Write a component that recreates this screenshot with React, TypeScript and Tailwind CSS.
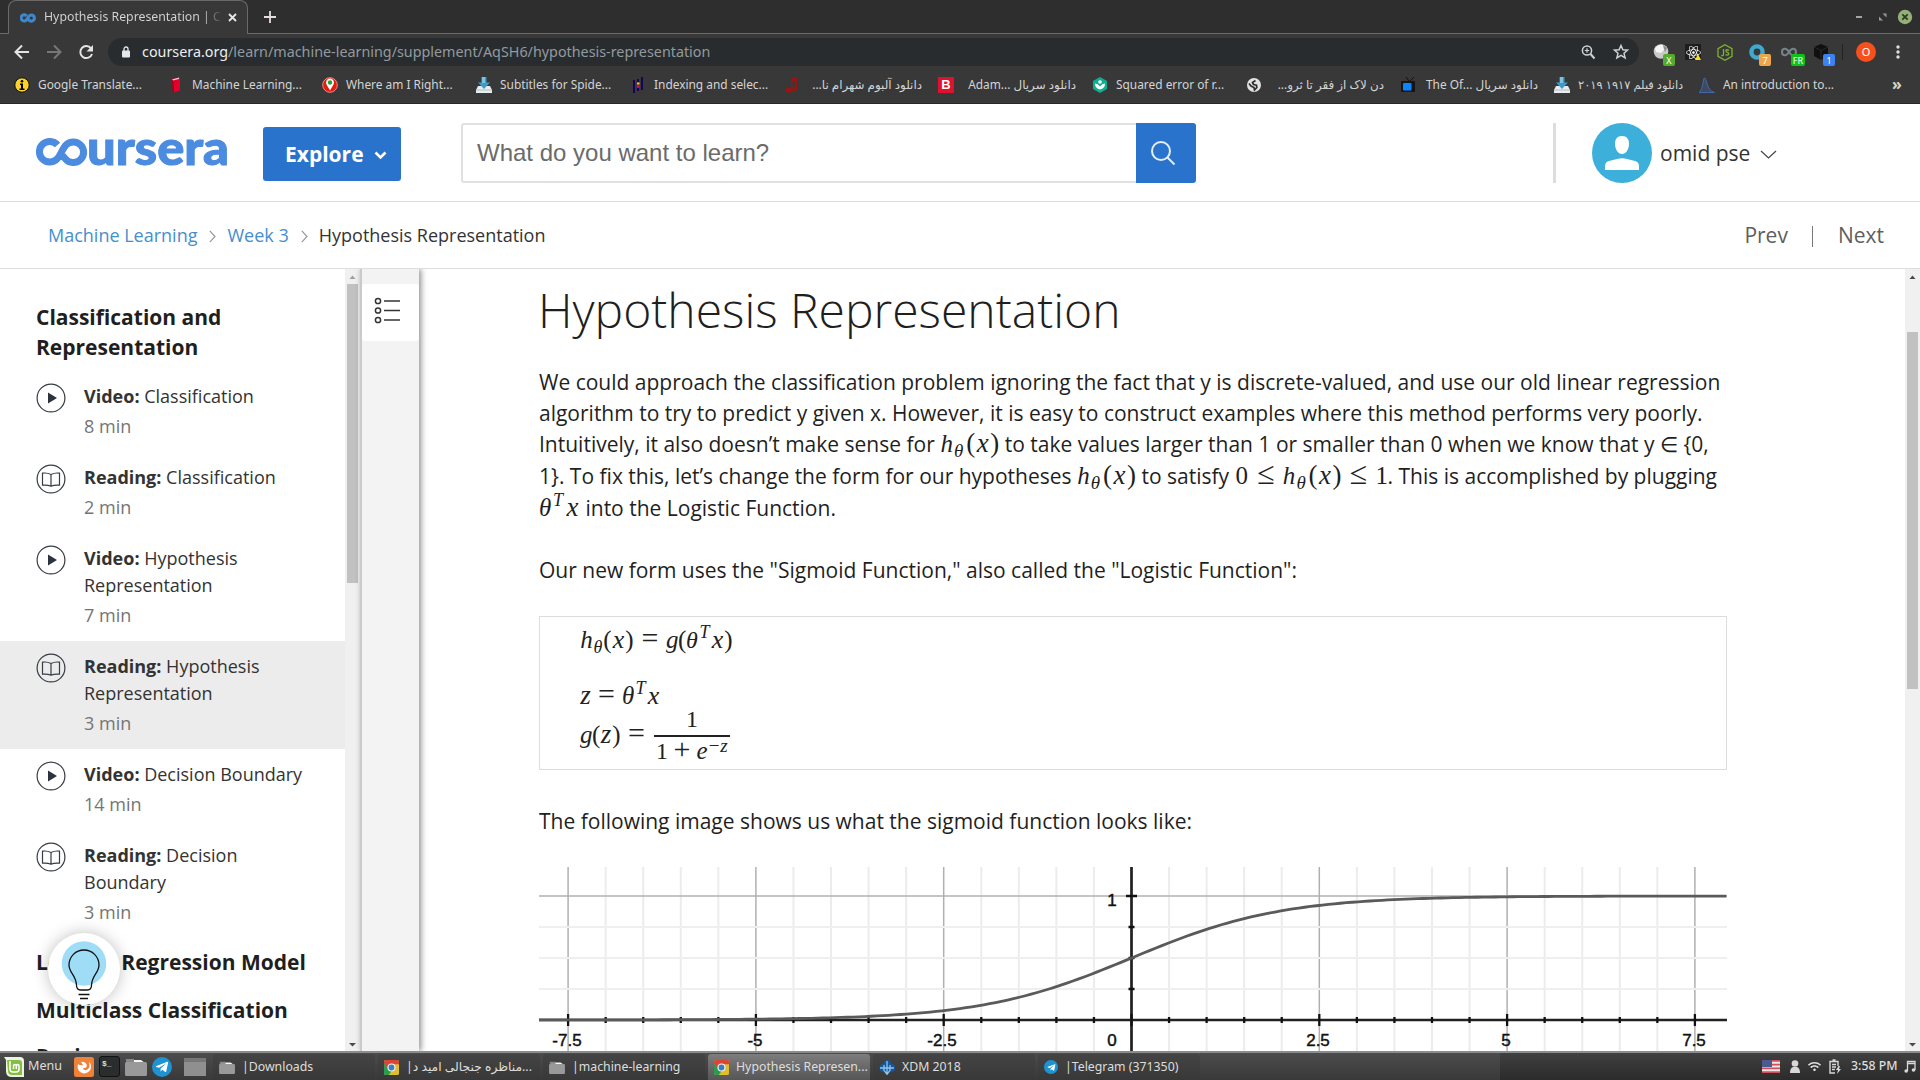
import React from "react";
import { FaWifi, FaReact, FaTelegramPlane } from "react-icons/fa";

const BrandMark = ({ className, color, width = 7 }: { className: string; color: string; width?: number }) => (
  <svg className={className} viewBox="0 0 52 28" fill="none" stroke={color} strokeWidth={width}>
    <path d="M21.5 7.5 A10 10 0 1 0 20.5 21 C24 17.5 26 11 29.5 7.5 A10 10 0 1 1 29 20.5 L25.8 16.5" />
  </svg>
);

/* ---------- browser chrome ---------- */

const TabStrip = () => (
  <div className="flex h-[34px] bg-[#2e2e2e]">
    <div className="w-[8px] border-b border-[#6a6a6a]" />
    <div className="flex h-[34px] w-[240px] items-center rounded-t-[8px] border border-b-0 border-[#6a6a6a] bg-[#383838] pl-[11px] text-[12.3px] text-[#d6d6d6]">
      <BrandMark className="h-[10px] w-[16px] shrink-0" color="#3d87cf" width={10} />
      <span className="ml-[8px] w-[177px] overflow-hidden bg-gradient-to-r from-[#d6d6d6] from-90% to-[#444] bg-clip-text whitespace-nowrap text-transparent">
        Hypothesis Representation | Co
      </span>
      <svg className="ml-[7px] h-[9px] w-[9px]" viewBox="0 0 9 9" stroke="#e8e8e8" strokeWidth="1.8">
        <path d="M1 1l7 7M8 1l-7 7" />
      </svg>
    </div>
    <div className="flex flex-1 items-center border-b border-[#6a6a6a]">
      <svg className="ml-[16px] h-[12px] w-[12px]" viewBox="0 0 12 12" stroke="#e6dede" strokeWidth="1.8">
        <path d="M6 0v12M0 6h12" />
      </svg>
      <svg className="ml-auto h-[16px] w-[66px]" viewBox="0 0 66 16">
        <path d="M2 8h6" stroke="#a4a4a4" strokeWidth="2" />
        <path d="M28.500 4.500h4v4zM25 7.500v4h4z" fill="#999" />
        <circle cx="51" cy="8" r="7.200" fill="#94b078" />
        <path d="M48.300 5.300l5.400 5.400M53.700 5.300l-5.400 5.400" stroke="#2c3a20" strokeWidth="1.800" />
      </svg>
    </div>
  </div>
);

const Extension = ({ children, badge, badgeClass }: { children: React.ReactNode; badge?: string; badgeClass?: string }) => (
  <div className="relative flex h-[20px] w-[32px] items-center justify-center">
    {children}
    {badge && (
      <span className={`absolute top-[12px] left-[18px] flex h-[12px] items-center justify-center rounded-[2px] text-[9px] leading-none text-white ${badgeClass}`}>
        {badge}
      </span>
    )}
  </div>
);

const Toolbar = () => (
  <div className="flex h-[36px] items-center bg-[#383838]">
    <svg className="h-[20px] w-[108px] shrink-0" viewBox="0 0 108 20" fill="none" strokeWidth="2">
      <path d="M29 10H16M22 3.500L15.500 10l6.500 6.500" stroke="#e4e4e4" />
      <path d="M47 10h13M54 3.500l6.500 6.500-6.500 6.500" stroke="#777" />
      <path d="M91 6.300A6 6 0 1 0 92 12" stroke="#e4e4e4" />
      <path d="M93 3v6.500h-6.500z" fill="#e4e4e4" />
    </svg>
    <div className="flex h-[28px] w-[1531px] items-center rounded-full bg-[#282c2f] pr-[5px] pl-[14px]">
      <svg className="h-[12px] w-[8px]" viewBox="0 0 8 12">
        <path d="M2 5V3a2 2 0 0 1 4 0v2" fill="none" stroke="#e4e8ea" strokeWidth="1.300" />
        <rect y="4.500" width="8" height="7" rx="1" fill="#e4e8ea" />
      </svg>
      <span className="mb-[1px] ml-[12px] text-[14.33px] whitespace-nowrap text-[#939a9e]">
        <span className="text-[#eceeef]">coursera.org</span>/learn/machine-learning/supplement/AqSH6/hypothesis-representation
      </span>
      <svg className="ml-auto h-[16px] w-[54px]" viewBox="0 0 54 16" fill="none" stroke="#cfd2d4">
        <circle cx="7" cy="6.500" r="4.600" strokeWidth="1.500" />
        <path d="M10.500 10l4 4.500" strokeWidth="2" />
        <path d="M4.800 6.500h4.400M7 4.300v4.400" strokeWidth="1.200" />
        <path d="M41 1.500l1.900 4.300 4.600.4-3.500 3.100 1.100 4.600-4.100-2.500-4.100 2.500L38 9.300l-3.500-3.100 4.600-.4z" strokeWidth="1.500" />
      </svg>
    </div>
    <div className="ml-[6px] flex items-center">
      <Extension badge="X" badgeClass="w-[12px] bg-[#56ab2f]">
        <svg className="h-[16px] w-[16px]" viewBox="0 0 16 16">
          <circle cx="8" cy="7.500" r="7.300" fill="#c9c9c9" />
          <path d="M2 4q4-5 8-3l1 5-3 3-5-1z" fill="#f4f4f4" />
          <path d="M10 1l4 3-2 4z" fill="#8a8a8a" />
        </svg>
      </Extension>
      <Extension>
        <span className="flex h-[16px] w-[16px] items-center justify-center bg-[#1d1d1d]">
          <FaReact className="h-[15px] w-[15px] text-white" />
        </span>
        <svg className="absolute top-[12px] left-[18px] h-[6px] w-[6px]" viewBox="0 0 6 6">
          <path d="M3 0l3 6H0z" fill="#f7df1e" />
        </svg>
      </Extension>
      <Extension>
        <svg className="h-[17px] w-[16px]" viewBox="0 0 16 17" fill="none" stroke="#7db32e" strokeWidth="1.300">
          <path d="M8 .8l7 3.900v7.600L8 16.200l-7-3.900V4.700z" />
          <path d="M6.500 5v5.500q0 1.500-2.200 1M12 6.300Q9 5 8.900 6.700 9 8 10.500 8.300 12 8.800 11.800 10 11 11.800 8.500 10.700" />
        </svg>
      </Extension>
      <Extension badge="7" badgeClass="w-[12px] bg-[#efa64a]">
        <svg className="h-[16px] w-[16px]" viewBox="0 0 16 16">
          <circle cx="8" cy="8" r="5.600" fill="none" stroke="#3fa9d0" strokeWidth="4.400" />
        </svg>
      </Extension>
      <Extension badge="FR" badgeClass="w-[14px] bg-[#0fc01d]">
        <svg className="h-[10px] w-[16px]" viewBox="0 0 16 10" fill="none" stroke="#77838b" strokeWidth="2">
          <path d="M8 5C5 0 1 1.500 1 5s4 5 7 0 7-3.500 7 0-4 5-7 0" />
        </svg>
      </Extension>
      <Extension badge="1" badgeClass="w-[12px] bg-[#3c82f0]">
        <svg className="h-[16px] w-[16px]" viewBox="0 0 16 16">
          <path d="M8 0l7 3v9l-7 4-7-4V3z" fill="#101010" />
          <path d="M1 3l7 3.500L15 3M8 6.500V16" stroke="#2a2a2a" fill="none" />
        </svg>
      </Extension>
    </div>
    <div className="ml-[5px] h-[16px] w-px bg-[#222]" />
    <div className="ml-[13px] flex h-[20px] w-[20px] items-center justify-center rounded-full bg-[#f6511d] text-[11px] text-white">O</div>
    <svg className="ml-[20px] h-[14px] w-[4px]" viewBox="0 0 4 14" fill="#dedede">
      <circle cx="2" cy="2" r="1.700" />
      <circle cx="2" cy="7" r="1.700" />
      <circle cx="2" cy="12" r="1.700" />
    </svg>
  </div>
);

const InfoIcon = () => (
  <svg viewBox="0 0 16 16">
    <circle cx="8" cy="8" r="7.200" fill="#fcd22b" stroke="#111" />
    <circle cx="8" cy="4.200" r="1.300" />
    <path d="M6 6.500h3v5h1.500V13H5.500v-1.500H7V8H6z" />
  </svg>
);
const RedBook = () => (
  <svg viewBox="0 0 16 16">
    <path d="M4 2l8-1.500v13L6 15.500z" fill="#e4002b" />
    <path d="M4 2.500l7-2V2L5 3.500z" fill="#f3c5cc" />
    <path d="M4 3l1.500 1L6 15.500 4.500 14z" fill="#a3001e" />
  </svg>
);
const PinIcon = () => (
  <svg viewBox="0 0 16 16">
    <circle cx="8" cy="8" r="7.300" fill="#e51a10" stroke="#ef8a80" />
    <path d="M8 13.500L4.500 7.500a4 4 0 1 1 7 0z" fill="#fff" />
    <circle cx="8" cy="5.500" r="2.200" fill="#24a030" />
  </svg>
);
const TrayIcon = () => (
  <svg viewBox="0 0 16 16">
    <path d="M2 9h12l2 4v3H0v-3z" fill="#e9edf0" />
    <path d="M0 13h16" stroke="#b5bcc2" />
    <path d="M5.500 0h5v5.500H14L8 12 2 5.500h3.500z" fill="#3d9ac9" />
    <path d="M6 0h3v6H6z" fill="#79c3e4" />
  </svg>
);
const PandasIcon = () => (
  <svg viewBox="0 0 16 16">
    <path d="M4 3v13M12 0v13" stroke="#150458" strokeWidth="2" />
    <path d="M8 2v3M8 11v3" stroke="#150458" strokeWidth="2" />
    <path d="M7 5.500h2.500v2H7z" fill="#ffca00" />
    <path d="M7 8.500h2.500v2H7z" fill="#e70488" />
  </svg>
);
const NotesIcon = () => (
  <svg viewBox="0 0 16 16" fill="#951512">
    <path d="M7 1l6-1v11h-1.500V4L8.500 5v8H7z" />
    <ellipse cx="5" cy="13" rx="4" ry="2.600" />
    <ellipse cx="11" cy="12" rx="2.300" ry="2" />
  </svg>
);
const LetterB = () => (
  <span className="flex h-[16px] w-[16px] items-center justify-center bg-[#e0102f] font-['Liberation_Sans',sans-serif] text-[13px] font-bold text-white">B</span>
);
const GreenHex = () => (
  <svg viewBox="0 0 16 16">
    <path d="M8 0l7 4v8l-7 4-7-4V4z" fill="#0fae90" />
    <circle cx="8" cy="5" r="1.800" fill="#fff" />
    <path d="M3 6.500q3 0 5 3 2-3 5-3 0 5-5 6-5-1-5-6z" fill="#fff" />
  </svg>
);
const Globe = () => (
  <svg viewBox="0 0 16 16">
    <circle cx="8" cy="8" r="7" fill="#e2e2e2" />
    <path d="M9.500 3.500L6.500 5.500l1 2 3 .8.300 2.200-2.300 2.500-.5-2.500L5 9 3 6.500" fill="none" stroke="#2d2d2d" strokeWidth="1.700" />
  </svg>
);
const TvIcon = () => (
  <svg viewBox="0 0 16 16">
    <path d="M9 4L6 0M10 4l4-4" stroke="#111" />
    <rect x="1" y="4" width="14" height="11" rx="1" fill="#151515" />
    <rect x="3" y="6" width="8.500" height="7.500" rx="1" fill="#0a84ff" />
  </svg>
);
const DensityIcon = () => (
  <svg viewBox="0 0 16 16">
    <path d="M0 15.500Q3 14 4.500 3 5.500-2 7.500 5q2 9 8 10.500z" fill="#3c4a63" stroke="#4668a8" />
  </svg>
);

const bookmarks: { icon: React.FC; text: string; rtl?: boolean; end?: boolean; cell?: string }[] = [
  { icon: InfoIcon, text: "Google Translate..." },
  { icon: RedBook, text: "Machine Learning..." },
  { icon: PinIcon, text: "Where am I Right..." },
  { icon: TrayIcon, text: "Subtitles for Spide..." },
  { icon: PandasIcon, text: "Indexing and selec..." },
  { icon: NotesIcon, text: "دانلود آلبوم شهرام نا...", rtl: true, end: true },
  { icon: LetterB, text: "Adam... دانلود سریال", end: true },
  { icon: GreenHex, text: "Squared error of r..." },
  { icon: Globe, text: "دن لاک از فقر تا ثرو...", rtl: true, end: true },
  { icon: TvIcon, text: "The Of... دانلود سریال", end: true },
  { icon: TrayIcon, text: "دانلود فیلم ۱۹۱۷ ۲۰۱۹", rtl: true, cell: "flex w-[145px] shrink-0 items-center text-[11.5px]" },
  { icon: DensityIcon, text: "An introduction to..." },
];

const Bookmarks = () => (
  <div className="flex h-[34px] items-center border-b border-[#2b2628] bg-[#383838] pb-[3px] pl-[14px] text-[11.9px] text-[#d4d4d4]">
    {bookmarks.map(({ icon: Icon, text, rtl, end, cell }, i) => (
      <div key={i} className={cell ?? "flex w-[154px] shrink-0 items-center"}>
        <span className="h-[16px] w-[16px] shrink-0">
          <Icon />
        </span>
        <span className={end ? "ml-[8px] w-[114px] text-right whitespace-nowrap" : "ml-[8px] whitespace-nowrap"}>
          <bdi dir={rtl ? "rtl" : "ltr"}>{text}</bdi>
        </span>
      </div>
    ))}
    <span className="mb-[3px] ml-[39px] text-[16px] leading-none font-bold">»</span>
  </div>
);

/* ---------- site header ---------- */

const SiteHeader = () => (
  <header className="flex h-[98px] shrink-0 items-center border-b border-[#ddd] bg-white pt-[1px] pl-[36px]">
    <div className="mb-[3px] flex h-[28px] w-[192px]">
      <svg className="h-[28px] w-[192px] overflow-visible" viewBox="0 0 192 28">
        <path d="M21.500 7A10.300 10.300 0 1 0 21 21C24.500 17.500 26.500 10.500 30 7A10.300 10.300 0 1 1 29.500 21L26.500 17.500" fill="none" stroke="#4b8be0" strokeWidth="7" />
        <text x="51" y="27" textLength="142" lengthAdjust="spacingAndGlyphs" fontFamily="Lato, sans-serif" fontWeight="900" fontSize="47" fill="#4b8be0" stroke="#4b8be0" strokeWidth="1">
          ursera
        </text>
      </svg>
    </div>
    <button className="mt-[2px] ml-[35px] flex h-[54px] w-[138px] items-center rounded-[3px] bg-[#2a73cc] pt-[2px] pl-[22px] text-[21px] font-bold text-white">
      Explore
      <svg className="ml-[10px] h-[9px] w-[13px]" viewBox="0 0 13 9" fill="none" stroke="#fff" strokeWidth="2.600">
        <path d="M1.500 1.500l5 5 5-5" />
      </svg>
    </button>
    <div className="ml-[60px] flex h-[60px] w-[675px] items-center rounded-l-[3px] border-2 border-r-0 border-[#e1e1e1] pl-[14px] font-['Liberation_Sans',sans-serif] text-[24px] text-[#6b6b6b]">
      What do you want to learn?
    </div>
    <div className="flex h-[60px] w-[60px] items-center justify-center rounded-r-[3px] bg-[#2a73cc]">
      <svg className="mr-[6px] h-[26px] w-[26px]" viewBox="0 0 26 26" fill="none" stroke="#e6eefa" strokeWidth="2">
        <circle cx="11" cy="11" r="9" />
        <path d="M17.500 17.500l7 7" />
      </svg>
    </div>
    <div className="ml-[357px] h-[60px] w-[3px] bg-[#ddd]" />
    <svg className="ml-[36px] h-[60px] w-[60px]" viewBox="0 0 60 60">
      <circle cx="30" cy="30" r="30" fill="#3cafda" />
      <path d="M30 13c5 0 7 3.500 7 8 0 5-3 10-7 10s-7-5-7-10c0-4.500 2-8 7-8z" fill="#fff" />
      <path d="M13 47v-4q0-4 4-5l8-2q5-1.500 10 0l8 2q4 1 4 5v4z" fill="#fff" />
    </svg>
    <span className="mt-[2px] ml-[8px] text-[21px] text-[#333]">omid pse</span>
    <svg className="mt-[3px] ml-[10px] h-[9px] w-[17px]" viewBox="0 0 17 9" fill="none" stroke="#444" strokeWidth="1.200">
      <path d="M1 1l7.500 7L16 1" />
    </svg>
  </header>
);

const CrumbArrow = () => (
  <svg className="mt-[2px] mr-[11px] ml-[12px] h-[13px] w-[7px]" viewBox="0 0 7 13" fill="none" stroke="#999" strokeWidth="1.200">
    <path d="M.8.800L6 6.500.8 12.200" />
  </svg>
);

const Breadcrumbs = () => (
  <nav className="flex h-[67px] shrink-0 items-center border-b border-[#ddd] bg-white pr-[36px] pl-[48px] text-[18px] text-[#333]">
    <span className="text-[#458fd0]">Machine Learning</span>
    <CrumbArrow />
    <span className="text-[#458fd0]">Week 3</span>
    <CrumbArrow />
    <span>Hypothesis Representation</span>
    <span className="mt-[2px] ml-auto text-[21px] text-[#5e5e5e]">Prev</span>
    <span className="mt-[2px] ml-[24px] h-[21px] w-px bg-[#777]" />
    <span className="mt-[2px] ml-[25px] text-[21px] text-[#5e5e5e]">Next</span>
  </nav>
);

/* ---------- lesson sidebar ---------- */

const items = [
  { kind: "Video", title: "Classification", min: 8 },
  { kind: "Reading", title: "Classification", min: 2 },
  { kind: "Video", title: "Hypothesis Representation", min: 7 },
  { kind: "Reading", title: "Hypothesis Representation", min: 3, active: true },
  { kind: "Video", title: "Decision Boundary", min: 14 },
  { kind: "Reading", title: "Decision Boundary", min: 3 },
];

const KindIcon = ({ kind }: { kind: string }) => (
  <svg className="h-[30px] w-[30px] shrink-0" viewBox="0 0 30 30" fill="none" stroke="#373c44" strokeWidth="1.200">
    <circle cx="15" cy="15" r="13.900" />
    {kind === "Video" ? (
      <path d="M12 9.500l9 5.500-9 5.500z" fill="#2c333d" stroke="none" />
    ) : (
      <path d="M15 10.500q-4-2-8.500-1.300v12q5-.5 8.500 1 3.500-1.500 8.500-1v-12Q19 8.500 15 10.500v11.500" />
    )}
  </svg>
);

const Sidebar = () => (
  <aside className="relative flex w-[345px] shrink-0 flex-col bg-white">
    <h2 className="mt-[33px] ml-[36px] w-[260px] text-[21px] leading-[30px] font-bold text-[#1f1f1f]">Classification and Representation</h2>
    <ul className="mt-[9px]">
      {items.map((it, i) => (
        <li key={i} className={it.active ? "flex bg-[#ececec] py-[12px] pl-[36px]" : "flex py-[12px] pl-[36px]"}>
          <KindIcon kind={it.kind} />
          <div className="ml-[18px] w-[225px] text-[18px] leading-[27px] text-[#333]">
            <div>
              <b>{it.kind}:</b> {it.title}
            </div>
            <div className="mt-[3px] text-[#757575]">{it.min} min</div>
          </div>
        </li>
      ))}
    </ul>
    <div className="ml-[36px] text-[21px] leading-[48px] font-bold whitespace-nowrap text-[#1f1f1f]">
      <div>Logistic Regression Model</div>
      <div>Multiclass Classification</div>
      <div className="-mt-[2px]">Review</div>
    </div>
    <div className="absolute top-[664px] left-[48px] h-[72px] w-[72px] rounded-full bg-white shadow-[0_0_16px_rgba(0,0,0,0.25)]">
      <svg className="h-[72px] w-[72px]" viewBox="0 0 72 72" fill="none" stroke="#111" strokeWidth="1.300">
        <circle cx="36" cy="30.500" r="22.300" fill="#9fdcf5" stroke="none" />
        <path d="M36 17a15 15 0 0 0-15 15c0 8 7 10 7.500 20q0 5 4 5h7q4 0 4-5c.5-10 7.500-12 7.500-20a15 15 0 0 0-15-15z" />
        <path d="M30.500 61.500h11M32 65.500h8" />
      </svg>
    </div>
  </aside>
);

const Scrollbar = ({ thumb, up }: { thumb: string; up: string }) => (
  <div className="flex w-[15px] shrink-0 flex-col items-center bg-[#f0f0f0]">
    <svg className="h-[15px] w-[15px] shrink-0" viewBox="0 0 15 15">
      <path d="M4.500 10h6L7.500 6.500z" fill={up} />
    </svg>
    <div className={`w-[11px] bg-[#c1c1c1] ${thumb}`} />
    <svg className="mt-auto h-[15px] w-[15px] shrink-0" viewBox="0 0 15 15">
      <path d="M4 7h7l-3.500 3.500z" fill="#4a4a4a" />
    </svg>
  </div>
);

const NotesRail = () => (
  <div className="z-10 w-[59px] shrink-0 border-l-2 border-[#cacaca] bg-[#f3f3f3] pt-[15px] shadow-[2px_0_6px_rgba(0,0,0,0.45)]">
    <svg className="h-[57px] w-[57px] rounded-[3px] bg-white" viewBox="0 0 57 57" fill="none" stroke="#333" strokeWidth="1.500">
      {[17, 26.5, 36].map((y) => (
        <g key={y}>
          <circle cx="16" cy={y} r="2.600" />
          <path d={`M22 ${y}h16`} />
        </g>
      ))}
    </svg>
  </div>
);

/* ---------- maths ---------- */

const G = ({ c, children }: { c: string; children: React.ReactNode }) => (
  <span className={`inline-block text-center font-['Liberation_Serif',serif] leading-[0] ${c}`}>{children}</span>
);

const HTheta = () => (
  <>
    <G c="w-[13px] text-[25px] italic">h</G>
    <G c="w-[11px] align-[-5px] text-[19px] italic">θ</G>
    <G c="ml-[2px] w-[9px] text-[27px]">(</G>
    <G c="w-[15px] text-[27px] italic">x</G>
    <G c="w-[9px] text-[27px]">)</G>
  </>
);

const ThetaT = () => (
  <>
    <G c="w-[12px] text-[25px] italic">θ</G>
    <G c="w-[14px] align-[10px] text-[18px] italic">T</G>
    <G c="w-[15px] text-[27px] italic">x</G>
  </>
);

const Formulas = () => (
  <div className="flex h-[154px] w-[1188px] shrink-0 flex-col border border-[#ddd] pl-[40px] whitespace-nowrap text-[#222]">
    <div className="mt-[8px] h-[30px] leading-[30px]">
      <G c="w-[13px] text-[25px] italic">h</G>
      <G c="w-[10px] align-[-5px] text-[18px] italic">θ</G>
      <G c="w-[9px] text-[25px]">(</G>
      <G c="w-[13px] text-[26px] italic">x</G>
      <G c="w-[9px] text-[25px]">)</G>
      <G c="w-[32px] text-[30px]">=</G>
      <G c="w-[12px] text-[25px] italic">g</G>
      <G c="w-[8px] text-[25px]">(</G>
      <G c="w-[12px] text-[24px] italic">θ</G>
      <G c="w-[13px] align-[10px] text-[18px] italic">T</G>
      <G c="w-[13px] text-[26px] italic">x</G>
      <G c="w-[9px] text-[25px]">)</G>
    </div>
    <div className="mt-[26px] h-[30px] leading-[30px]">
      <G c="w-[11px] text-[27px] italic">z</G>
      <G c="w-[31px] text-[30px]">=</G>
      <G c="w-[12px] text-[25px] italic">θ</G>
      <G c="w-[13px] align-[10px] text-[18px] italic">T</G>
      <G c="w-[13px] text-[26px] italic">x</G>
    </div>
    <div className="-mt-[2px] flex items-center">
      <div className="mb-[4px] h-[30px] leading-[30px]">
        <G c="w-[12px] text-[25px] italic">g</G>
        <G c="w-[8px] text-[25px]">(</G>
        <G c="w-[12px] text-[27px] italic">z</G>
        <G c="w-[9px] text-[25px]">)</G>
        <G c="w-[31px] text-[30px]">=</G>
      </div>
      <div className="ml-[2px] flex w-[76px] flex-col items-center">
        <div className="h-[26px] leading-[21px]">
          <G c="w-[12px] text-[24px]">1</G>
        </div>
        <div className="h-[2px] w-full bg-[#222]" />
        <div className="h-[28px] leading-[29px]">
          <G c="w-[12px] text-[24px]">1</G>
          <G c="w-[28px] text-[30px]">+</G>
          <G c="w-[12px] text-[25px] italic">e</G>
          <G c="w-[12px] align-[7px] text-[19px]">−</G>
          <G c="w-[8px] align-[7px] text-[19px] italic">z</G>
        </div>
      </div>
    </div>
  </div>
);

/* ---------- sigmoid plot ---------- */

const X0 = 592.5;
const UNIT = 75.12;
const Y0 = 153;
const HEIGHT = 124;
const minors = Array.from({ length: 31 }, (_, i) => i - 15);
const curve = Array.from({ length: 201 }, (_, i) => {
  const x = -7.9 + (15.82 * i) / 200;
  return `${i ? "L" : "M"}${(X0 + x * UNIT).toFixed(2)} ${(Y0 - HEIGHT / (1 + Math.exp(-x))).toFixed(2)}`;
}).join("");

const Plot = () => (
  <svg className="mt-[29px] h-[184px] w-[1188px] shrink-0" viewBox="0 0 1188 184">
    {minors.map((m) => (
      <path key={m} d={`M${X0 + m * 37.56} 0V184`} stroke={m % 5 ? "#ececec" : "#b0b0b0"} strokeWidth={m % 5 ? 2 : 1.5} />
    ))}
    {[60, 91, 122].map((y) => (
      <path key={y} d={`M0 ${y}H1188`} stroke="#efefef" strokeWidth="2" />
    ))}
    <path d="M0 29H1188" stroke="#b0b0b0" strokeWidth="1.500" />
    <path d={`M0 153H1188M${X0} 0V184`} stroke="#222" strokeWidth="2.700" />
    {minors.map((m) => (
      <path key={m} d={m % 5 ? `M${X0 + m * 37.56} 150v6` : `M${X0 + m * 37.56} 147v12`} stroke="#111" strokeWidth="2.300" />
    ))}
    <path d={`M${X0 - 5.5} 29h11M${X0 - 3} 60h6M${X0 - 3} 91h6M${X0 - 3} 122h6`} stroke="#111" strokeWidth="2.600" />
    <path d={curve} fill="none" stroke="#5a5a5a" strokeWidth="2.800" />
    <g fontFamily="Liberation Sans, sans-serif" fontSize="17" fill="#111" stroke="#111" strokeWidth="0.450" textAnchor="middle">
      <text x="28" y="178.500">-7.5</text>
      <text x="216" y="178.500">-5</text>
      <text x="403" y="178.500">-2.5</text>
      <text x="573" y="178.500">0</text>
      <text x="779" y="178.500">2.5</text>
      <text x="967" y="178.500">5</text>
      <text x="1155" y="178.500">7.5</text>
      <text x="573" y="38.500">1</text>
    </g>
  </svg>
);

const Article = () => (
  <main className="flex flex-1 flex-col overflow-hidden pl-[120px] text-[21px] leading-[31.5px] whitespace-nowrap text-[#1f1f1f]">
    <h1 className="-ml-px mt-[8px] text-[48px] leading-[66px] font-light">Hypothesis Representation</h1>
    <div className="mt-[24px]">
      <div className="h-[31px]">We could approach the classification problem ignoring the fact that y is discrete-valued, and use our old linear regression</div>
      <div className="h-[31px]">algorithm to try to predict y given x. However, it is easy to construct examples where this method performs very poorly.</div>
      <div className="h-[32px]">
        Intuitively, it also doesn’t make sense for <HTheta /> to take values larger than 1 or smaller than 0 when we know that y ∈ {"{0,"}
      </div>
      <div className="h-[32px]">
        1{"}"}. To fix this, let’s change the form for our hypotheses <HTheta /> to satisfy <G c="ml-px w-[12px] text-[25px]">0</G>
        <G c="ml-[2px] w-[33px] text-[32px]">≤</G>
        <HTheta />
        <G c="w-[34px] text-[32px]">≤</G>
        <G c="w-[12px] text-[25px]">1</G>. This is accomplished by plugging
      </div>
      <div className="h-[31.5px]">
        <ThetaT /> into the Logistic Function.
      </div>
    </div>
    <p className="mt-[30px]">Our new form uses the "Sigmoid Function," also called the "Logistic Function":</p>
    <div className="h-[30px] shrink-0" />
    <Formulas />
    <p className="mt-[36px]">The following image shows us what the sigmoid function looks like:</p>
    <Plot />
  </main>
);

/* ---------- desktop panel ---------- */

const Folder = ({ className }: { className: string }) => (
  <svg className={className} viewBox="0 0 22 18">
    <path d="M2 5l2-3h12l4 3z" fill="#f5f5f5" />
    <path d="M1 1h8v3H1z" fill="#888" />
    <rect y="4" width="22" height="14" rx="1.500" fill="#999" />
  </svg>
);
const ChromeLogo = () => (
  <svg className="h-[15px] w-[15px]" viewBox="0 0 16 16">
    <rect width="16" height="16" rx="2" fill="#e0bd2f" />
    <path d="M0 2q0-2 2-2h12q2 0 2 2v2.500H8L4 9 0 4z" fill="#db4437" />
    <path d="M0 3.500l5 7L8 12l-3 4H2q-2 0-2-2z" fill="#2a9b51" />
    <circle cx="8" cy="8" r="4.300" fill="#f3f3f3" />
    <circle cx="8" cy="8" r="3.100" fill="#3a7fc6" />
  </svg>
);
const XdmLogo = () => (
  <svg className="h-[15px] w-[16px]" viewBox="0 0 16 15">
    <path d="M.5 8q0-4 4-4 1-4 4-4t4 4q3.500 0 3.500 4t-3.500 4h-8q-4 0-4-4z" fill="#17579a" />
    <path d="M1 8h14M8 1v12M5.500 11L8 14.300l2.500-3.300M5 5v6M11 5v6" stroke="#8ec3ee" strokeWidth="1.300" fill="none" />
  </svg>
);
const Telegram = ({ big }: { big?: boolean }) => (
  <span className={`flex items-center justify-center rounded-full bg-[#1f93d2] text-white ${big ? "h-[20px] w-[20px] text-[14px]" : "h-[14px] w-[14px] text-[9px]"}`}>
    <FaTelegramPlane />
  </span>
);

const tasks: { icon: React.ReactNode; text: string; active?: boolean }[] = [
  { icon: <Folder className="h-[13px] w-[16px]" />, text: "|Downloads" },
  { icon: <ChromeLogo />, text: "|مناظره جنجالی امید د..." },
  { icon: <Folder className="h-[13px] w-[16px]" />, text: "|machine-learning" },
  { icon: <ChromeLogo />, text: "Hypothesis Represen...", active: true },
  { icon: <XdmLogo />, text: "XDM 2018" },
  { icon: <Telegram />, text: "|Telegram (371350)" },
];

const Panel = () => (
  <footer className="flex h-[29px] shrink-0 items-center border-t-2 border-[#8b8d8d] bg-gradient-to-b from-[#404040] to-[#2b2b2b] text-[12.3px] text-[#dedede]">
    <div className="flex h-full w-[1500px] items-center bg-gradient-to-b from-[#4c4c4c] to-[#393939]">
      <svg className="ml-[4px] h-[20px] w-[20px]" viewBox="0 0 20 20">
        <path d="M0 0h16q4 0 4 4v16H8q-6 0-6-6V3z" fill="#eef3e8" />
        <path d="M3 3h12q3 0 3 3v12H8q-4 0-4-4z" fill="#86be43" />
        <path d="M6 4v8q0 3 3 3h3q3 0 3-3V9q0-1.500-1.300-1.500T12.300 9v3M12.300 9q0-1.500-1.400-1.500T9.500 9v3" fill="none" stroke="#fff" strokeWidth="1.500" />
      </svg>
      <span className="ml-[4px] w-[45px] text-[12.600px]">Menu</span>
      <svg className="ml-[1px] h-[20px] w-[20px] shrink-0" viewBox="0 0 20 20">
        <rect width="20" height="20" rx="2.500" fill="#ef8238" />
        <path d="M4 7q2 2 5 1L7 5q3-1 5 1.500 2 3-1 4.500-2 .5-2.500-.5 1 4 5 2 3-2 1.500-8 4 5 .5 9.500-4 4-8.500 1.500T4 7z" fill="#fff" />
      </svg>
      <span className="ml-[5px] flex h-[21px] w-[21px] items-start rounded-[3px] border border-[#111] bg-[#2a2d2e] pt-[3px] pl-[2px] font-['Liberation_Mono',monospace] text-[8px] leading-none font-bold">$_</span>
      <Folder className="ml-[5px] h-[18px] w-[22px]" />
      <span className="ml-[5px]">
        <Telegram big />
      </span>
      <span className="ml-[12px] h-[18px] w-[22px] border-t-4 border-[#777] bg-[#8f8f8f]" />
      <div className="ml-[7px] flex h-full gap-[3px] pt-[1px]">
        {tasks.map((t, i) => (
          <div
            key={i}
            className={
              t.active
                ? "flex w-[162px] items-center rounded-t-[3px] bg-gradient-to-b from-[#7d7d7d] to-[#565656] pl-[6px]"
                : "flex w-[162px] items-center rounded-t-[3px] bg-gradient-to-b from-[#444] to-[#383838] pl-[6px]"
            }
          >
            {t.icon}
            <span className="ml-[7px] whitespace-nowrap">{t.text}</span>
          </div>
        ))}
      </div>
    </div>
    <svg className="ml-[262px] h-[13px] w-[18px]" viewBox="0 0 18 13">
      <rect width="18" height="13" fill="#f1e9e9" />
      <path d="M0 .8h18M0 4.600h18M0 8.400h18M0 12.200h18" stroke="#d0505c" strokeWidth="1.700" />
      <rect width="10" height="7" fill="#4a5b8f" />
    </svg>
    <svg className="ml-[10px] h-[14px] w-[10px]" viewBox="0 0 10 14" fill="#d8d8d8">
      <circle cx="5" cy="3.500" r="3.300" />
      <path d="M0 13q0-5 3-6h4q3 1 3 6z" />
    </svg>
    <FaWifi className="ml-[8px] h-[13px] w-[13px]" />
    <svg className="ml-[8px] h-[15px] w-[12px]" viewBox="0 0 12 15" fill="none" stroke="#d8d8d8" strokeWidth="1.400">
      <path d="M6 14H1V2.500h8V7M3.500 1h3M3 5.500h4M3 8h4M3 10.500h3" />
      <path d="M9.500 7L7 11h2l-1 4 4-5h-2l1-3z" fill="#d8d8d8" stroke="none" />
    </svg>
    <span className="ml-[10px] font-medium whitespace-nowrap">3:58 PM</span>
    <svg className="ml-[7px] h-[13px] w-[12px] shrink-0" viewBox="0 0 12 13">
      <path d="M3.500 11V1.500H11V10M3.500 3.500H11" fill="none" stroke="#d8d8d8" strokeWidth="1.300" />
      <circle cx="2.200" cy="11" r="1.800" fill="#d8d8d8" />
      <circle cx="9.500" cy="10" r="1.800" fill="#d8d8d8" />
    </svg>
  </footer>
);

export default function App() {
  return (
    <div className="flex h-[1080px] w-[1920px] flex-col overflow-hidden bg-white font-['Noto_Sans','DejaVu_Sans',sans-serif]">
      <TabStrip />
      <Toolbar />
      <Bookmarks />
      <div className="flex min-h-0 flex-1 flex-col font-['Open_Sans',sans-serif]">
        <SiteHeader />
        <Breadcrumbs />
        <div className="flex min-h-0 flex-1 overflow-hidden">
          <Sidebar />
          <Scrollbar thumb="h-[299px]" up="#a0a0a0" />
          <NotesRail />
          <Article />
          <Scrollbar thumb="mt-[48px] h-[357px]" up="#4a4a4a" />
        </div>
      </div>
      <Panel />
    </div>
  );
}
